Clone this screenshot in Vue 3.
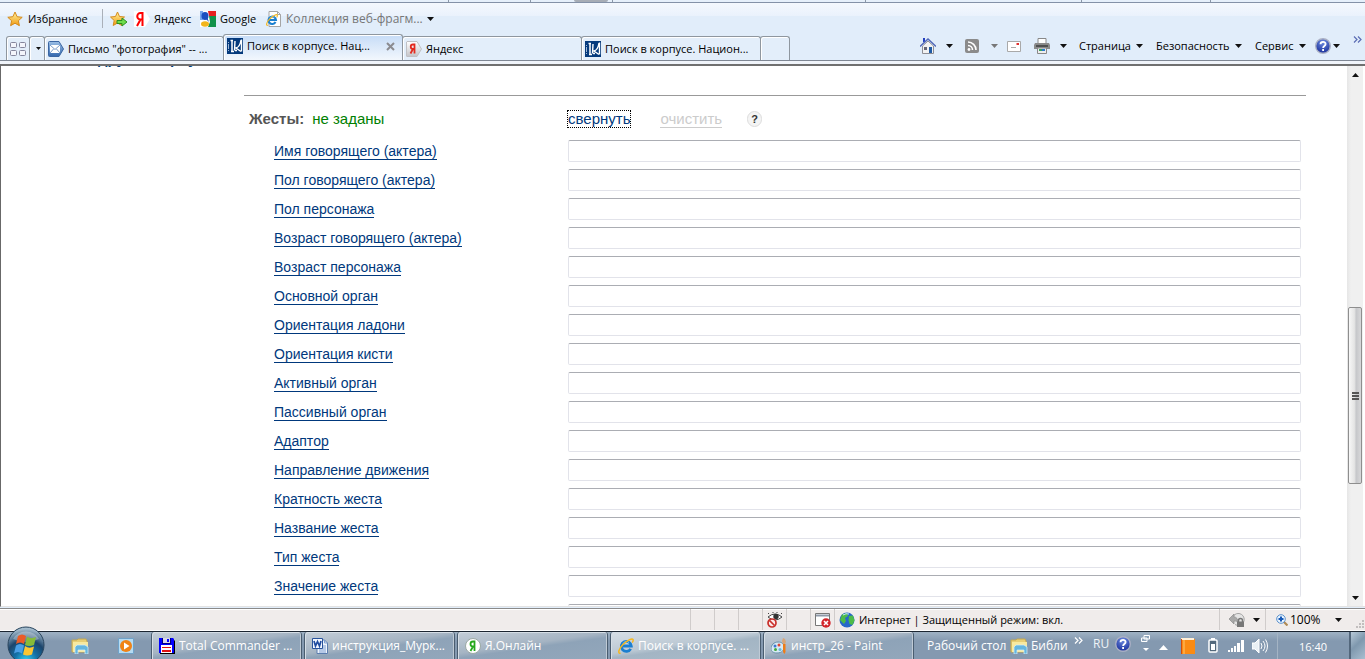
<script setup>
import { ref } from 'vue'

const fields = ref([
  { id: 'actor-name', label: 'Имя говорящего (актера)', value: '' },
  { id: 'actor-sex', label: 'Пол говорящего (актера)', value: '' },
  { id: 'char-sex', label: 'Пол персонажа', value: '' },
  { id: 'actor-age', label: 'Возраст говорящего (актера)', value: '' },
  { id: 'char-age', label: 'Возраст персонажа', value: '' },
  { id: 'main-organ', label: 'Основной орган', value: '' },
  { id: 'palm', label: 'Ориентация ладони', value: '' },
  { id: 'hand', label: 'Ориентация кисти', value: '' },
  { id: 'active-organ', label: 'Активный орган', value: '' },
  { id: 'passive-organ', label: 'Пассивный орган', value: '' },
  { id: 'adaptor', label: 'Адаптор', value: '' },
  { id: 'direction', label: 'Направление движения', value: '' },
  { id: 'repeat', label: 'Кратность жеста', value: '' },
  { id: 'gesture-name', label: 'Название жеста', value: '' },
  { id: 'gesture-type', label: 'Тип жеста', value: '' },
  { id: 'gesture-meaning', label: 'Значение жеста', value: '' },
  { id: 'gesture-extra', label: '', value: '' }
])

const tabs = [
  { icon: 'i-mail', title: 'Письмо "фотография" -- ...' },
  { icon: 'i-corpus', title: 'Поиск в корпусе. Нац...', active: true },
  { icon: 'i-yatab', title: 'Яндекс' },
  { icon: 'i-corpus', title: 'Поиск в корпусе. Национ...' }
]

const tasks = [
  { icon: 'i-floppy', title: 'Total Commander ...' },
  { icon: 'i-word', title: 'инструкция_Мурк...' },
  { icon: 'i-online', title: 'Я.Онлайн' },
  { icon: 'i-ie', title: 'Поиск в корпусе. ...', active: true },
  { icon: 'i-paint', title: 'инстр_26 - Paint' }
]
</script>

<template>
  <div class="screen">
    <svg class="defs" aria-hidden="true">
      <defs>
        <linearGradient id="g-star" x1="0" y1="0" x2="0" y2="1">
          <stop offset="0" stop-color="#fff3a0" /><stop offset="1" stop-color="#f09a10" />
        </linearGradient>
        <linearGradient id="g-blue" x1="0" y1="0" x2="0" y2="1">
          <stop offset="0" stop-color="#9bbfe6" /><stop offset="1" stop-color="#3467ad" />
        </linearGradient>
        <linearGradient id="g-tag" x1="0" y1="0" x2="0" y2="1">
          <stop offset="0" stop-color="#fff" /><stop offset="1" stop-color="#c4c4c8" />
        </linearGradient>
        <radialGradient id="g-orb" cx="50%" cy="95%" r="90%">
          <stop offset="0" stop-color="#35d5f5" /><stop offset=".35" stop-color="#1372a8" />
          <stop offset=".65" stop-color="#1c456c" /><stop offset="1" stop-color="#a5bccd" />
        </radialGradient>
        <radialGradient id="g-help" cx="50%" cy="25%" r="75%">
          <stop offset="0" stop-color="#6c8be0" /><stop offset="1" stop-color="#1a2f9b" />
        </radialGradient>
      </defs>
      <symbol id="i-star" viewBox="0 0 16 16">
        <path d="M8 1l2.1 4.7 5.1.6-3.8 3.4 1 5L8 12.2l-4.4 2.5 1-5L.8 6.3l5.1-.6z" fill="url(#g-star)" stroke="#d58a1c" />
      </symbol>
      <symbol id="i-mail" viewBox="0 0 16 16">
        <path d="M1.500 .5h9.500l4.500 7.500-4.500 7.500H1.500a1 1 0 0 1-1-1v-13a1 1 0 0 1 1-1z" fill="url(#g-blue)" stroke="#3b66a3" />
        <path d="M2 4h10v8H2z" fill="#fff" /><path d="M2 4l5 4.500L12 4M2 12l3.500-4M12 12L8.500 8" fill="none" stroke="#7b9cc8" />
      </symbol>
      <symbol id="i-corpus" viewBox="0 0 16 16">
        <path d="M0 0h16v16H0z" fill="#053a7c" />
        <path d="M1.500 4v1M1.500 6v5M1.500 12v1" stroke="#9fb6d4" />
        <path d="M5 3v10M3.500 2.500h2.500M4 13.500h3" fill="none" stroke="#fff" stroke-width="1.500" />
        <path d="M8 3l-.5 9.500M14.500 1.500v12M14 2q-1 7-5 8l5 3.500M8 12.500h2" fill="none" stroke="#fff" stroke-width="1.400" />
      </symbol>
      <symbol id="i-yatab" viewBox="0 0 16 16">
        <path d="M1 .5h10l4.500 7.500-4.500 7.500H1a.5.5 0 0 1-.5-.5V1z" fill="url(#g-tag)" stroke="#c0c0c4" />
        <path d="M8.500 12.500v-9H7a2.200 2.200 0 0 0 0 4.500h1.500M7 8l-2.500 4.500" fill="none" stroke="#e32b20" stroke-width="1.800" />
      </symbol>
      <symbol id="i-floppy" viewBox="0 0 16 16">
        <path d="M1 1h13l2 2v13H1z" fill="#000" /><path d="M0 0h14l1 1v14H0z" fill="#00f" />
        <path d="M3 0h9v6H3z" fill="#000080" /><path d="M4 0h7v5H4z" fill="#d8d8e8" /><path d="M8 1h2v3H8z" fill="#00f" />
        <path d="M2 7h11v8H2z" fill="#fff" /><path d="M3 9h9v1H3zM3 12h9v2H3z" fill="#e01010" />
      </symbol>
      <symbol id="i-word" viewBox="0 0 16 16">
        <path d="M5 2h7.500L15.500 5v10.500H5z" fill="#eef4fc" stroke="#5b7dae" />
        <path d="M12.500 2v3h3M8 8h6M8 10h6M7 12h7M7 14h7" fill="none" stroke="#7c9dd0" />
        <path d="M.5.5h10v10H.5z" fill="#f3f7ff" stroke="#29539c" /><path d="M2 3l1.500 5L5.500 3.500 7.500 8 9 3" fill="none" stroke="#1f4ba0" stroke-width="1.700" />
      </symbol>
      <symbol id="i-online" viewBox="0 0 16 16">
        <circle cx="8" cy="8" r="7.500" fill="#fff" stroke="#9ba9a4" />
        <path d="M9.500 13V3.500H8a2.400 2.400 0 0 0 0 5h1.500M8 8.500L5.500 13" fill="none" stroke="#25a81c" stroke-width="1.800" />
      </symbol>
      <symbol id="i-ie" viewBox="0 0 16 16">
        <path d="M12.700 10.800A5 5 0 1 1 13.300 8H4" fill="none" stroke="#1b7fd0" stroke-width="2.800" />
        <path d="M5 5.500a4 4 0 0 1 6-1" fill="none" stroke="#7bd0f7" />
        <path d="M2.500 15C-.5 16 .5 11 5 6.500S14.800-.6 15.200 1.800c.1 1-.4 2-1 2.800" fill="none" stroke="#f4b720" stroke-width="1.500" />
      </symbol>
      <symbol id="i-paint" viewBox="0 0 16 16">
        <path d="M7 4c4 0 6 2 6 5s-2 6-7 6c-4 0-6-2-6-4 0-4 3-7 7-7z" fill="#d7e9f3" stroke="#6892ac" />
        <circle cx="4" cy="8" r="1.500" fill="#3d77d0" /><circle cx="8" cy="7" r="1.500" fill="#e04737" />
        <circle cx="4.500" cy="11.500" r="1.500" fill="#41a93e" /><circle cx="9" cy="11.500" r="1.500" fill="#66b9dd" />
        <path d="M12 0l2 1 1 3-1 2h-2l-1-3z" fill="#d7a679" /><path d="M12 6h2.500v8l-1 2-1.500-2z" fill="#ee7c17" />
      </symbol>
      <symbol id="i-folder" viewBox="0 0 18 16">
        <path d="M1 2h5l1-1h8l1 2v11H1z" fill="#e8cf75" stroke="#c3a852" /><path d="M2 4h15v10H2z" fill="#f7e9a0" />
        <path d="M4 9l2-2h8l3 2v7h-3v-4H7v4H4z" fill="#65b6df" stroke="#d8f0fa" stroke-width=".7" />
      </symbol>
      <symbol id="i-help" viewBox="0 0 16 16">
        <circle cx="8" cy="8" r="7.300" fill="url(#g-help)" stroke="#aab0c4" stroke-width="1.400" />
        <path d="M5.500 6.300C5.500 3.300 10.600 3.200 10.600 6c0 2-2.500 2-2.500 4M8.100 11v2" fill="none" stroke="#fff" stroke-width="1.800" />
      </symbol>
      <symbol id="i-down" viewBox="0 0 7 4"><path d="M0 0h7L3.500 4z" fill="currentColor" /></symbol>
      <symbol id="i-more" viewBox="0 0 9 7">
        <path d="M1 .5l3 3-3 3M5 .5l3 3-3 3" fill="none" stroke="currentColor" stroke-width="1.200" />
      </symbol>
    </svg>

    <div class="strip"><i></i><i></i><b></b><i></i><i></i><i></i><i></i></div>

    <nav class="favorites">
      <button class="fav first"><svg class="i16"><use href="#i-star" /></svg>Избранное</button>
      <button class="fav add" aria-label="Добавить">
        <svg class="i18" viewBox="0 0 18 16">
          <path d="M7.500 1l2 4.500 5 .5-3.800 3.500 1 5-4.200-2.500L3.200 14.500l1-5L.5 6l5-.5z" fill="url(#g-star)" stroke="#d58a1c" />
          <path d="M7 9.500h5V7l5 4-5 4v-2.500H7z" fill="#6fdc4b" stroke="#2b9122" />
        </svg>
      </button>
      <a class="fav ya" href="#">
        <svg class="i16" viewBox="0 0 16 16"><path d="M0 0h11l5 8-5 8H0z" fill="#fff" /><path d="M8.500 15V2H6.500a3 3 0 0 0 0 6.500h2M6.500 8.500L3 15" fill="none" stroke="#f00" stroke-width="2" /></svg>Яндекс
      </a>
      <a class="fav goo" href="#">
        <svg class="i16" viewBox="0 0 16 16">
          <path d="M0 0h16v16H0z" fill="#fff" /><path d="M8 0h8v5H9z" fill="#e82020" /><path d="M9 5h7v11H8l2-5z" fill="#12924b" />
          <path d="M0 0h3v9H0z" fill="#76a7ee" /><ellipse cx="5" cy="5" rx="3.500" ry="4" fill="#1b4fc0" /><ellipse cx="5" cy="13" rx="4" ry="2.700" fill="#f2b51c" /><path d="M6 8l3 3-2-5z" fill="#1b4fc0" />
        </svg>Google
      </a>
      <button class="fav muted">
        <svg class="i16" viewBox="0 0 16 16"><path d="M3 .5h8.500l3 3v12H3z" fill="#fff" stroke="#a5a5a5" /><path d="M11.500.5v3h3" fill="none" stroke="#a5a5a5" /><svg y="3" width="12" height="12"><use href="#i-ie" /></svg></svg>Коллекция веб-фрагм...<svg class="arrow"><use href="#i-down" /></svg>
      </button>
    </nav>

    <div class="tabrow">
      <button class="quick" aria-label="Быстрые вкладки">
        <svg class="i16" viewBox="0 0 16 16"><g fill="#f4f5fb" stroke="#85869c"><rect x=".5" y="1.500" width="6" height="5" rx="1" /><rect x="9.500" y="1.500" width="6" height="5" rx="1" /><rect x=".5" y="9.500" width="6" height="5" rx="1" /><rect x="9.500" y="9.500" width="6" height="5" rx="1" /></g></svg>
      </button>
      <button class="quick list" aria-label="Список вкладок"><svg class="arrow small"><use href="#i-down" /></svg></button>
      <button v-for="(t, i) in tabs" :key="i" class="tab" :class="{ active: t.active }">
        <svg class="i16"><use :href="'#' + t.icon" /></svg><span>{{ t.title }}</span>
        <svg v-if="t.active" class="close" viewBox="0 0 9 9"><path d="M1 1l7 7M8 1L1 8" stroke="#8b8b90" stroke-width="2" /></svg>
      </button>
      <button class="newtab" aria-label="Новая вкладка"></button>

      <div class="commands">
        <button class="cmd home" aria-label="Домой">
          <svg class="i16" viewBox="0 0 16 16"><path d="M3 0h2v4H3z" fill="#2440c0" /><path d="M2.500 8v7.500h11V8L8 3z" fill="#f2f2f2" stroke="#8f8f95" /><path d="M0 8.500L8 1l8 7.500" fill="none" stroke="#5269b9" stroke-width="1.500" /><path d="M9 9h3v6H9z" fill="#1f5ba5" /><path d="M4 9h3v3H4z" fill="#667" /></svg>
          <svg class="arrow"><use href="#i-down" /></svg>
        </button>
        <button class="cmd rss" aria-label="Каналы">
          <svg class="i14" viewBox="0 0 14 14"><rect width="14" height="14" rx="2" fill="#8b8b8b" /><circle cx="4" cy="10.500" r="1.400" fill="#fff" /><path d="M3 6.500a4.500 4.500 0 0 1 4.500 4.500M3 3a8 8 0 0 1 8 8" fill="none" stroke="#fff" stroke-width="1.600" /></svg>
          <svg class="arrow grey"><use href="#i-down" /></svg>
        </button>
        <button class="cmd post" aria-label="Почта">
          <svg class="letter" viewBox="0 0 14 11"><path d="M.5.5h13v10H.5z" fill="#fff" stroke="#a9a9a9" /><path d="M9.500 2h2.500v2H9.500z" fill="#e03030" /><path d="M4 6.500h5" stroke="#aaa" /></svg>
        </button>
        <button class="cmd print" aria-label="Печать">
          <svg class="i16" viewBox="0 0 16 16"><path d="M4 .5h8V6H4z" fill="#fff" stroke="#888" /><path d="M1 5h14l1 2v4H0V7z" fill="#8a8a8a" /><path d="M2 7h12v2H2z" fill="#505050" /><path d="M3.500 10h9v5.500h-9z" fill="#eee" stroke="#888" /><path d="M5 12h6" stroke="#3ba35a" stroke-width="2" /><path d="M8 12h3" stroke="#2a79d0" stroke-width="2" /></svg>
          <svg class="arrow"><use href="#i-down" /></svg>
        </button>
        <button class="cmd page">Страница<svg class="arrow"><use href="#i-down" /></svg></button>
        <button class="cmd safe">Безопасность<svg class="arrow"><use href="#i-down" /></svg></button>
        <button class="cmd serv">Сервис<svg class="arrow"><use href="#i-down" /></svg></button>
        <button class="cmd help" aria-label="Справка"><svg class="i16"><use href="#i-help" /></svg><svg class="arrow"><use href="#i-down" /></svg></button>
        <button class="cmd over" aria-label="Ещё"><svg class="more"><use href="#i-more" /></svg></button>
      </div>
    </div>

    <div class="viewport">
      <main class="page-body">
        <a class="other" href="#">другой корпус</a>
        <section class="form">
          <div class="row head">
            <div class="name"><strong>Жесты:</strong><span class="state">не заданы</span></div>
            <div class="actions">
              <a class="toggle" href="#">свернуть</a>
              <a class="clear" href="#">очистить</a>
              <button class="hint">?</button>
            </div>
          </div>
          <div v-for="f in fields" :key="f.id" class="row">
            <div class="name"><a v-if="f.label" :id="f.id + '-l'" href="#">{{ f.label }}</a></div>
            <input :id="f.id" v-model="f.value" type="text" :aria-labelledby="f.id + '-l'" />
          </div>
        </section>
      </main>
      <div class="scroll">
        <button class="sbtn" aria-label="Вверх"><svg class="arrow up"><use href="#i-down" /></svg></button>
        <div class="before"></div>
        <div class="thumb"><i></i><i></i><i></i></div>
        <div class="after"></div>
        <button class="sbtn" aria-label="Вниз"><svg class="arrow"><use href="#i-down" /></svg></button>
      </div>
    </div>

    <footer class="status">
      <span class="cell"></span><span class="cell"></span><span class="cell"></span>
      <span class="cell">
        <svg class="i16" viewBox="0 0 16 16"><path d="M1 5q7-6 14 0-7 6-14 0z" fill="#fff" stroke="#444" /><circle cx="9" cy="4.500" r="2.700" fill="#333" /><path d="M2 2l-1-1M6 1V0M10 1V0M14 2l1-1" stroke="#444" /><circle cx="5" cy="11" r="4" fill="#fbeaea" stroke="#c9302b" stroke-width="1.700" /><path d="M2.500 8.500l5 5" stroke="#c9302b" stroke-width="1.700" /></svg>
      </span>
      <span class="cell"></span>
      <span class="cell">
        <svg class="i16" viewBox="0 0 16 16"><path d="M.5 1.500h14v12H.5z" fill="#fff" stroke="#777" /><path d="M1 3.500h13" stroke="#8e99a8" stroke-width="2" /><circle cx="11" cy="11" r="4.700" fill="#d3242a" /><path d="M9 9l4 4M13 9l-4 4" stroke="#fff" stroke-width="1.600" /></svg>
      </span>
      <span class="cell zone">
        <svg class="i16" viewBox="0 0 16 16"><circle cx="8" cy="8" r="7.500" fill="#2768c8" /><path d="M3 2.500l5-1.500 1 3-3 2 1 3-2 3L1 8zM10 4l4-.5 1.500 5-2 4.500-3-1-1-4z" fill="#4dbb48" /><path d="M4 3q3-2 6-1" stroke="#c8e9ff" fill="none" /></svg>
        Интернет | Защищенный режим: вкл.
      </span>
      <button class="cell prot" aria-label="Защита">
        <svg class="i16" viewBox="0 0 16 16"><path d="M6 12.500A6 6 0 1 0 4 4.500" fill="#e4e4e4" stroke="#a5a5a5" /><path d="M0 7l5-5v3q4 0 4 6Q8 8 5 9v3z" fill="#a9a9a9" stroke="#8b8b8b" stroke-width=".7" /><path d="M9.500 10V8.500a2 2 0 0 1 4 0V10" fill="none" stroke="#777" stroke-width="1.500" /><path d="M8 9.500h7V15H8z" fill="#777" /></svg>
        <svg class="arrow"><use href="#i-down" /></svg>
      </button>
      <button class="cell zoomer">
        <svg class="i12" viewBox="0 0 12 12"><path d="M8 8l3.500 3.500" stroke="#b08a55" stroke-width="2.200" /><circle cx="5" cy="5" r="4.300" fill="#eaf5ff" stroke="#5a90cc" /><path d="M5 2.500v5M2.500 5h5" stroke="#1659b8" stroke-width="2" /></svg>
        <span>100%</span><svg class="arrow"><use href="#i-down" /></svg>
      </button>
      <svg class="grip" viewBox="0 0 8 8"><path d="M6 0h2v2H6zM3 3h2v2H3zM6 3h2v2H6zM0 6h2v2H0zM3 6h2v2H3zM6 6h2v2H6z" fill="#c2bebe" /></svg>
    </footer>

    <footer class="taskbar">
      <button class="orb" aria-label="Пуск">
        <svg viewBox="0 0 38 38">
          <circle cx="19" cy="19" r="18" fill="url(#g-orb)" stroke="#28445d" />
          <path d="M6 13a15 15 0 0 1 26 0q-13 6-26 0z" fill="#fff" opacity=".3" />
          <path d="M11 10q4-3 8 0l-2 8q-4-3-8 0z" fill="#ea5b27" /><path d="M20 10.500q4 3 9 .5l-2 8q-5 2-9 0z" fill="#87bc38" />
          <path d="M9 19.500q4-3 8 0l-2 8q-4-3-8 0z" fill="#4a9fe5" /><path d="M18 20q4 3 9 .5l-2 8q-5 2-9 0z" fill="#fcc632" />
        </svg>
      </button>
      <button class="pin" aria-label="Проводник"><svg class="i18"><use href="#i-folder" /></svg></button>
      <button class="pin media" aria-label="Проигрыватель">
        <svg class="i16" viewBox="0 0 16 16"><path d="M.5.5h15v15H.5z" fill="#b5dbf3" stroke="#6fa2c9" /><circle cx="8" cy="8" r="6" fill="#f08316" /><path d="M6 4.500L11.500 8 6 11.500z" fill="#fff" /></svg>
      </button>
      <div class="tasks">
        <button v-for="t in tasks" :key="t.title" class="task" :class="{ active: t.active }">
          <svg class="i16"><use :href="'#' + t.icon" /></svg><span>{{ t.title }}</span>
        </button>
      </div>
      <div class="tray">
        <span class="desk">Рабочий стол</span>
        <span class="lib"><svg class="i18"><use href="#i-folder" /></svg><span>Библи</span></span>
        <svg class="more tmore"><use href="#i-more" /></svg>
        <span class="lang">RU</span>
        <svg class="i16 thelp"><use href="#i-help" /></svg>
        <svg class="win" viewBox="0 0 9 18"><path d="M3 .5h5.500V4H3zM.5 3H6v3.500H.5z" fill="#8fa5bb" stroke="#fff" /><path d="M2 13h6l-3 3z" fill="#fff" /></svg>
        <svg class="peak" viewBox="0 0 9 5"><path d="M0 5h9L4.500 0z" fill="#fff" /></svg>
        <svg class="i16 book" viewBox="0 0 16 16"><path d="M1 1h14v15H1z" fill="#fb8b13" /><path d="M1 0h13v2H1z" fill="#fff0d8" /><path d="M4 2v14" stroke="#ffc66e" /><path d="M1 1h1v15H1z" fill="#d64e08" /></svg>
        <svg class="bat" viewBox="0 0 10 15"><path d="M3 0h4v2H3z" fill="#fff" /><rect x="1" y="2" width="8" height="12" rx="1" fill="#53697c" stroke="#fff" stroke-width="1.500" /><path d="M3 6h4v6H3z" fill="#fff" /></svg>
        <svg class="i16 sig" viewBox="0 0 16 16"><path d="M0 12h2v2H0zM3 10h2v4H3zM6 8h2v6H6zM9 5h3v9H9zM13 2h3v12h-3z" fill="#fff" /></svg>
        <svg class="i16 snd" viewBox="0 0 16 16"><path d="M0 5h3l4-4v14l-4-4H0z" fill="#e9f0f5" stroke="#fff" /><path d="M9 5q2 3 0 6M11 3q4 5 0 10M13.500 1.500q4 6.500 0 13" fill="none" stroke="#fff" /></svg>
        <time class="clock">16:40</time>
        <button class="peek" aria-label="Свернуть все окна"></button>
      </div>
    </footer>
  </div>
</template>

<style>
body { margin: 0; overflow: hidden; }
</style>

<style scoped>
.screen {
  display: flex; flex-direction: column; height: 100vh; overflow: hidden;
  background: #e1edfa; color: #000; font: 11px/16px "Open Sans", "Noto Sans", sans-serif;
}
.defs { position: absolute; width: 0; height: 0; }
svg { display: block; flex: none; }
.i12 { width: 12px; height: 12px; }
.i14 { width: 14px; height: 14px; }
.i16 { width: 16px; height: 16px; }
.i18 { width: 18px; height: 16px; }
.arrow { width: 7px; height: 4px; color: #111; }
.arrow.small { width: 5px; height: 3px; }
.arrow.grey { color: #777; }
.arrow.up { transform: rotate(180deg); }
.more { width: 9px; height: 7px; }
button {
  display: flex; align-items: center; box-sizing: border-box; padding: 0; border: 0;
  background: none; color: inherit; font: inherit; white-space: nowrap; cursor: pointer;
}

.strip { flex: none; display: grid; grid-template-columns: 82fr 44fr 38fr 253fr 216fr 129fr 1px; height: 2px; padding: 0 154px 0 448px; border-bottom: 1px solid #8492a8; background: #e6f0fb; }
.strip i { width: 1px; background: #8b97a8; }
.strip b { width: 34px; border-radius: 0 0 4px 4px; background: #a7adb6; }

.favorites { flex: none; display: flex; align-items: center; height: 31px; background: linear-gradient(#f4f8fe, #eaf2fc 13px, #e1edfa 13px); }
.fav { display: flex; align-items: center; gap: 4px; color: #000; text-decoration: none; white-space: nowrap; }
.fav.first { width: 96px; height: 19px; margin-left: 7px; gap: 5px; border-right: 1px solid #aab0b9; }
.fav.add { margin-left: 7px; }
.fav.ya { width: 58px; margin-left: 6px; }
.fav.goo { width: 59px; margin-left: 8px; }
.fav.muted { margin-left: 7px; color: #777; font-size: 12px; }

.tabrow { flex: none; display: flex; align-items: flex-end; height: 26px; border-bottom: 1px solid #7f8794; padding-left: 6px; }
.quick, .tab, .newtab { height: 24px; border: 1px solid #8f979f; border-bottom: 0; border-radius: 3px 3px 0 0; background: #e3eefa; box-shadow: inset 1px 1px #fff; }
.quick { width: 24px; padding-left: 3px; }
.quick.list { width: 16px; margin-left: -1px; justify-content: center; }
.tab { flex: 0 1 180px; min-width: 0; margin-left: -1px; padding: 0 3px; gap: 4px; }
.tab.active { height: 26px; padding-bottom: 3px; background: linear-gradient(#c6dcf7, #f2f7fd); }
.close { width: 9px; height: 9px; margin: 0 4px 0 auto; }
.newtab { width: 30px; margin-left: -1px; }

.commands { display: flex; align-items: center; height: 26px; margin-left: auto; padding-bottom: 1px; }
.cmd { justify-content: space-between; }
.home { width: 33px; margin-right: 12px; }
.rss { width: 33px; margin-right: 9px; }
.post { width: 14px; margin-right: 13px; }
.print { width: 33px; margin-right: 12px; }
.page { width: 64px; margin-right: 13px; }
.safe { width: 86px; margin-right: 13px; }
.serv { width: 51px; margin-right: 9px; }
.help { width: 25px; margin-right: 13px; }
.over { width: 12px; padding-bottom: 13px; color: #5a6cb4; }
.letter { width: 14px; height: 11px; }

.viewport {
  flex: 1; min-height: 0; display: flex; margin-top: 3px; overflow: hidden;
  border-top: 2px solid #707070; border-left: 1px solid #686868; border-bottom: 1px solid #e3e3e3; background: #fff;
  box-shadow: 0 -3px #f0f4fa;
}
.page-body { flex: 1; min-width: 0; overflow: hidden; font: 15px/18px "Liberation Sans", Arial, sans-serif; }
.other { display: block; height: 29px; margin: -16px 0 0 97px; color: #00427f; font-weight: bold; text-decoration: none; }
.form { margin: 16px 41px 0 243px; border-top: 1px solid #999; padding: 10px 5px 0 0; }
.row { display: grid; grid-template-columns: 324px 1fr; align-items: center; height: 29px; }
.row .name { padding-left: 30px; font-size: 14px; white-space: nowrap; }
.row a { color: #00387c; text-decoration: none; border-bottom: 1px solid #00387c; line-height: 16px; display: inline-block; }
.row.head { height: 26px; margin-bottom: 4px; }
.row.head .name { display: flex; gap: 8px; padding-left: 5px; color: #555; font-size: 15px; }
.row.head .state { color: #008000; }
.actions { display: flex; align-items: center; }
.row .toggle { border: 0; outline: 1px dotted #000; }
.row .clear { margin-left: 30px; color: #ccc; border-color: #ccc; }
.hint { width: 15px; height: 16px; margin-left: 25px; justify-content: center; border: 1px solid #ddd; border-radius: 8px; background: #f4f4f4; color: #333; font: bold 11px/14px "Liberation Sans", sans-serif; }
.row input { box-sizing: border-box; width: 100%; height: 22px; border: 1px solid #e2e3ea; border-top-color: #abadb3; border-radius: 2px; padding: 1px 4px; font: inherit; background: #fff; outline: 0; }

.scroll { flex: none; display: flex; flex-direction: column; width: 16px; margin-right: 2px; background: linear-gradient(90deg, #e6e6e6, #f0f0f0 4px); }
.sbtn { flex: none; height: 17px; justify-content: center; }
.before { flex: 224; }
.after { flex: 105; }
.thumb { flex: 175; display: flex; flex-direction: column; align-items: center; justify-content: center; gap: 1px; box-sizing: border-box; margin: 0 1px; border: 1px solid #8e8e8e; border-radius: 2px; background: linear-gradient(90deg, #f7f7f7 0, #e4e4e4 45%, #c6c7ca 60%, #d8d8da); }
.thumb i { width: 7px; height: 2px; background: #555; }

.status { flex: none; display: flex; height: 21px; margin-top: 1px; border-top: 1px solid #8a8a8a; border-bottom: 1px solid #fff; background: #f0eceb; box-shadow: inset 0 1px #fff; justify-content: flex-end; }
.cell { display: flex; align-items: center; box-sizing: border-box; width: 24px; padding-left: 4px; border-left: 1px solid #d0cccb; }
.zone { width: 385px; gap: 4px; white-space: nowrap; }
.prot { width: 46px; padding: 0 6px 0 9px; gap: 8px; justify-content: space-between; }
.zoomer { width: 91px; padding: 0 14px 0 10px; font-size: 12px; }
.zoomer span { margin: 0 auto 0 2px; }
.grip { width: 8px; height: 8px; margin-top: 11px; margin-right: 1px; }

.taskbar { flex: none; position: relative; display: flex; height: 27px; border-top: 1px solid #1c2632; background: linear-gradient(#9fb2c4, #8499b0 9px, #8499b0); color: #fff; font-size: 12px; }
.orb { position: absolute; left: 7px; top: -6px; width: 38px; height: 38px; }
.orb svg { width: 38px; height: 38px; }
.pin { margin-left: 71px; }
.pin.media { margin-left: 29px; }
.tasks { display: flex; gap: 2px; margin-left: 17px; }
.task { width: 151px; padding: 0 7px; gap: 4px; border: 1px solid #4a5d70; border-top: 0; border-bottom: 0; border-radius: 3px 3px 0 0; background: linear-gradient(172deg, #c4ced8, #a5b4c3 45%, #8ea3b8 55%, #93a7bb); box-shadow: inset 1px 1px #d5dee6, inset -1px 0 #bfcad5; }
.task.active { background: linear-gradient(172deg, #d6dee5, #bcc9d4 45%, #a3b5c4 55%, #aabbc9); }
.tray { display: flex; align-items: center; margin-left: auto; white-space: nowrap; }
.desk { width: 83px; }
.lib { display: flex; gap: 3px; width: 64px; }
.tmore { margin-bottom: 10px; }
.lang { width: 22px; margin: 0 0 4px 10px; color: #eef3f7; }
.thelp { margin-bottom: 4px; }
.win { width: 9px; height: 18px; margin: 0 8px 4px 10px; }
.peak { width: 9px; height: 5px; margin: 4px 12px 0 1px; }
.book { margin-right: 12px; }
.bat { width: 10px; height: 15px; margin-right: 10px; }
.sig { margin-right: 8px; }
.snd { margin-right: 9px; }
.clock { box-sizing: border-box; width: 72px; height: 27px; padding-left: 21px; border-left: 1px solid #a4b4c4; font-size: 11px; line-height: 29px; }
.peek { width: 16px; height: 27px; border-left: 2px solid #53677c; background: linear-gradient(135deg, #b7c9d8, #7f98ae 45%, #a9bed0); }
</style>
